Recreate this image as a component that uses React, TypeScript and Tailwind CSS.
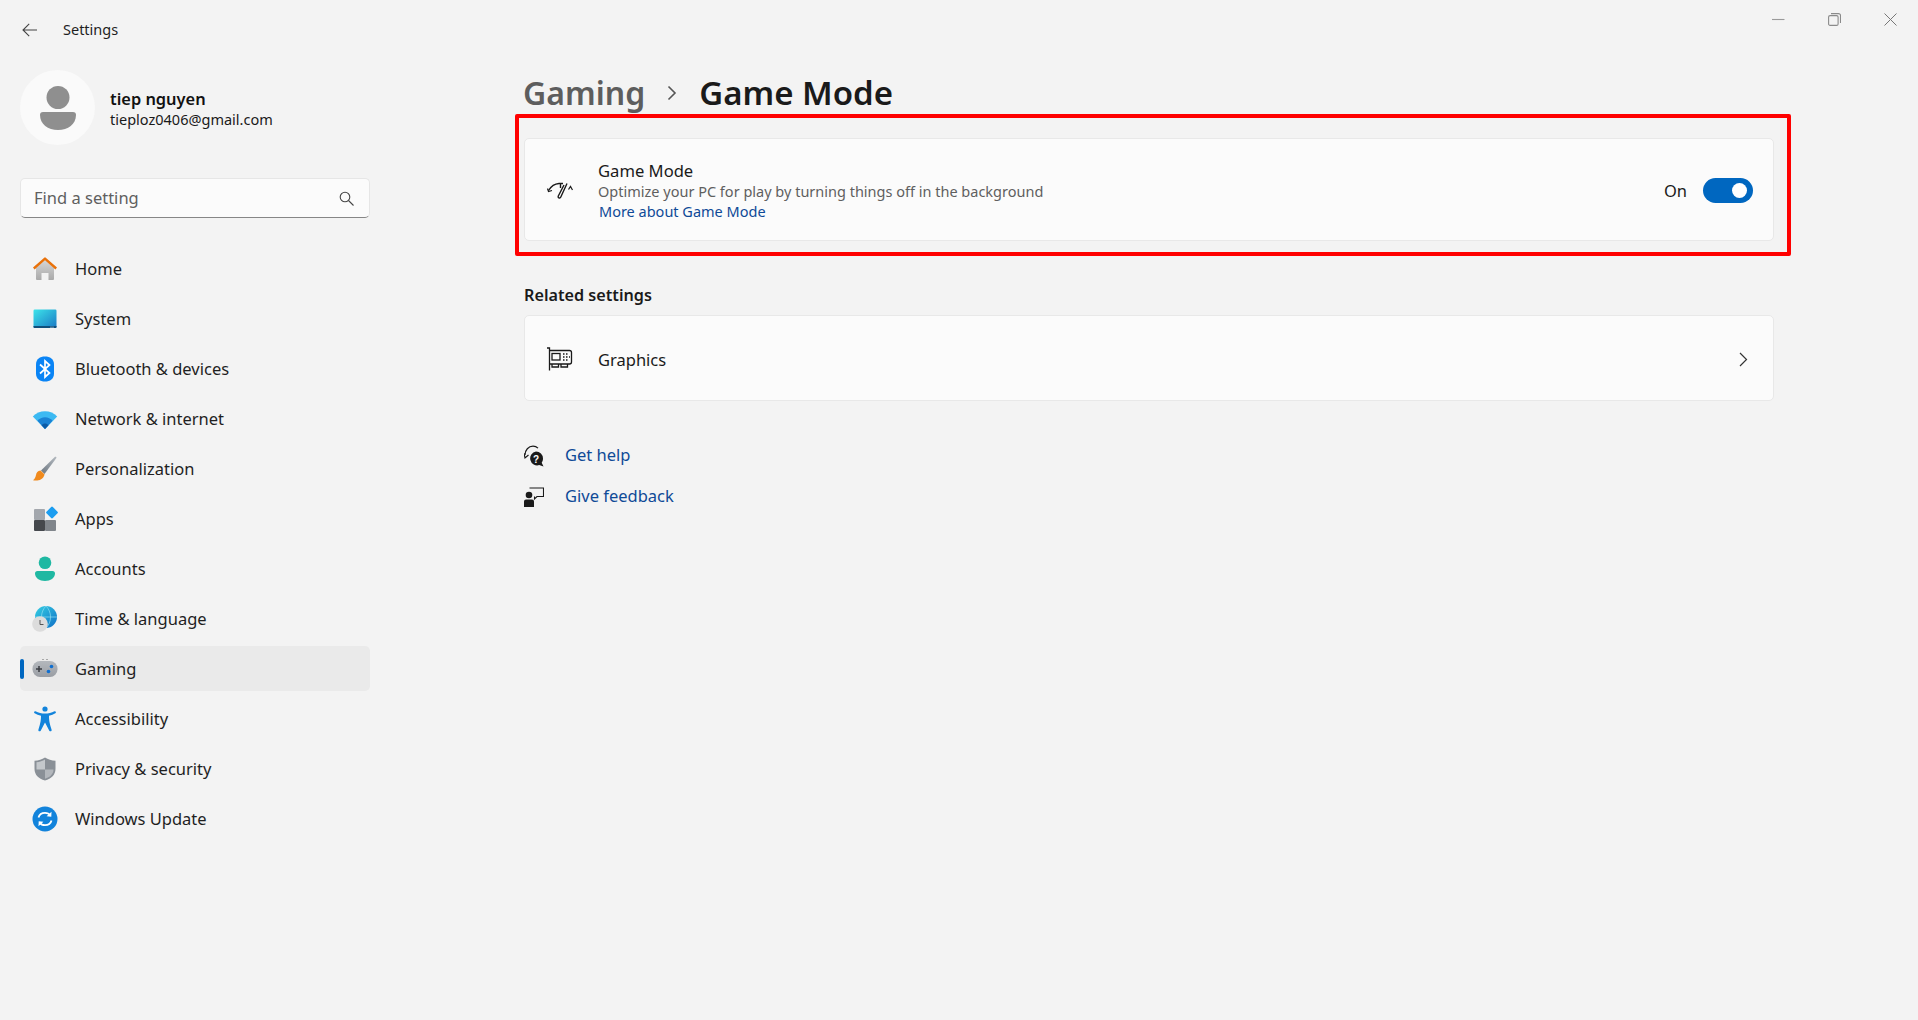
import type { ReactNode } from "react";

function HomeIcon() {
  return (
    <svg width="26" height="26" viewBox="0 0 26 26">
      <defs>
        <linearGradient id="homeBody" x1="0" y1="0" x2="0" y2="1">
          <stop offset="0" stopColor="#d6d6d6" />
          <stop offset="1" stopColor="#a9a9a9" />
        </linearGradient>
      </defs>
      <path d="M4 12 13 4l9 8v11a1 1 0 0 1-1 1h-4.500v-7h-7v7H5a1 1 0 0 1-1-1z" fill="url(#homeBody)" />
      <path d="M1.800 12.500 13 2.600l11.200 9.900" fill="none" stroke="#e8710a" strokeWidth="2.400" strokeLinejoin="round" />
    </svg>
  );
}

function SystemIcon() {
  return (
    <svg width="26" height="26" viewBox="0 0 26 26">
      <defs>
        <linearGradient id="sysScreen" x1="0" y1="0" x2="1" y2="1">
          <stop offset="0" stopColor="#3ce4ea" />
          <stop offset="1" stopColor="#1a78c4" />
        </linearGradient>
      </defs>
      <rect x="1.500" y="3.500" width="23" height="18.500" rx="1.200" fill="url(#sysScreen)" />
      <path d="M1.500 20h23v1a1 1 0 0 1-1 1h-21a1 1 0 0 1-1-1z" fill="#0f4f7c" />
      <rect x="18.500" y="20.700" width="1" height="1" fill="#cfe6f3" />
      <rect x="20.500" y="20.700" width="1" height="1" fill="#cfe6f3" />
    </svg>
  );
}

function BluetoothIcon() {
  return (
    <svg width="26" height="26" viewBox="0 0 26 26">
      <path d="M13 .5c5 0 9 2.500 9 8v9c0 5.500-4 8-9 8s-9-2.500-9-8v-9c0-5.500 4-8 9-8z" fill="#0a84f5" />
      <path d="m8 8.500 9.500 8.500L13 21V5l4.500 4L8 17.500" fill="none" stroke="#fff" strokeWidth="1.700" />
    </svg>
  );
}

function WifiIcon() {
  return (
    <svg width="26" height="26" viewBox="0 0 26 26">
      <path d="M.8 10.500C4 7 8.300 5.200 13 5.200s9 1.800 12.200 5.300L13 23z" fill="#3cb9f2" />
      <path d="M5.500 14.800C7.500 12.500 10 11.300 13 11.300s5.500 1.200 7.500 3.500L13 23z" fill="#1a82d4" />
      <path d="M9.500 19.300c1-1.100 2.200-1.700 3.500-1.700s2.500.6 3.500 1.700L13 23z" fill="#0c5ba6" />
    </svg>
  );
}

function BrushIcon() {
  return (
    <svg width="26" height="26" viewBox="0 0 26 26">
      <defs>
        <linearGradient id="brushHandle" x1="0" y1="1" x2="1" y2="0">
          <stop offset="0" stopColor="#6c7680" />
          <stop offset="1" stopColor="#b4bac0" />
        </linearGradient>
      </defs>
      <path d="M9 14.500 23 .8c.8-.5 1.800.3 1.400 1.200L12.500 18z" fill="url(#brushHandle)" />
      <path d="M8.500 14.500c-3 .3-4 2-4.500 4.500-.4 2-1.300 4-3 5.300 4 .8 10 .3 11.600-5.800z" fill="#f08a1d" />
    </svg>
  );
}

function AppsIcon() {
  return (
    <svg width="26" height="26" viewBox="0 0 26 26">
      <rect x="2" y="3" width="11" height="11" rx="1" fill="#a3a7ad" />
      <rect x="2" y="14" width="11" height="11" rx="1" fill="#45484d" />
      <rect x="13" y="14" width="11" height="11" rx="1" fill="#80858b" />
      <rect x="15.500" y="2" width="9" height="9" rx="1.200" transform="rotate(45 20 6.500)" fill="#1b9df0" />
    </svg>
  );
}

function AccountsIcon() {
  return (
    <svg width="26" height="26" viewBox="0 0 26 26">
      <circle cx="13" cy="6.800" r="6.300" fill="#1fb8a2" />
      <path d="M5.500 15h15A2.500 2.500 0 0 1 23 17.500c0 4.500-4.500 7.500-10 7.500S3 22 3 17.500A2.500 2.500 0 0 1 5.500 15z" fill="#1fb8a2" />
    </svg>
  );
}

function TimeIcon() {
  return (
    <svg width="26" height="26" viewBox="0 0 26 26">
      <defs>
        <linearGradient id="globeFill" x1="0" y1="0" x2="1" y2="1">
          <stop offset="0" stopColor="#35d0e4" />
          <stop offset="1" stopColor="#0f6fc6" />
        </linearGradient>
      </defs>
      <circle cx="14" cy="11" r="11" fill="url(#globeFill)" />
      <path d="M14 0c-3 3-4.500 6.800-4.500 11S11 19 14 22c3-3 4.500-6.800 4.500-11S17 3 14 0zM3 11h22" fill="none" stroke="#8fdcf0" strokeWidth=".7" />
      <circle cx="8" cy="18" r="7.800" fill="#dcdcdc" />
      <path d="M8 14v4.500h3.500" fill="none" stroke="#555" strokeWidth="1" />
    </svg>
  );
}

function GamingIcon() {
  return (
    <svg width="26" height="26" viewBox="0 0 26 26">
      <defs>
        <linearGradient id="padFill" x1="0" y1="0" x2="0" y2="1">
          <stop offset="0" stopColor="#b4b8bd" />
          <stop offset="1" stopColor="#9a9ea4" />
        </linearGradient>
      </defs>
      <rect x=".5" y="5" width="25" height="16" rx="7.500" fill="url(#padFill)" />
      <path d="M7 10v6M4 13h6" stroke="#3a3d42" strokeWidth="1.500" />
      <circle cx="19.500" cy="10.500" r="1.800" fill="#0f6fd0" />
      <circle cx="16.500" cy="15.500" r="1.800" fill="#0f6fd0" />
      <rect x="10.500" y="3" width="1" height="1" fill="#666" />
      <rect x="14.500" y="3" width="1" height="1" fill="#666" />
    </svg>
  );
}

function AccessibilityIcon() {
  return (
    <svg width="26" height="26" viewBox="0 0 26 26">
      <circle cx="13" cy="3" r="2.600" fill="#1283db" />
      <path d="M3.500 5.200c3 1.500 6 2.300 9.500 2.300s6.500-.8 9.500-2.300c1.300-.4 2 1.400.9 2.100-1.900 1.200-4 2-6.400 2.500 0 4 .3 7 2.600 14 .4 1.500-1.600 2.100-2.300.9L13 16.500l-4.300 8.200c-.7 1.200-2.700.6-2.300-.9C8.700 16.800 9 13.800 9 9.800c-2.400-.5-4.500-1.300-6.400-2.500-1.100-.7-.4-2.500.9-2.100z" fill="#1283db" />
    </svg>
  );
}

function ShieldIcon() {
  return (
    <svg width="26" height="26" viewBox="0 0 26 26">
      <path d="M13 1.500c3 2 6.500 3 10.500 3.200v8c0 6-4 10-10.500 11.800C6.500 22.700 2.500 18.700 2.500 12.700v-8C6.500 4.500 10 3.500 13 1.500z" fill="#8a9097" />
      <path d="M13 3.500v10H4.500v-7.200C7.800 6 10.500 5 13 3.500z" fill="#c4c8cc" />
      <path d="M13 13.500h8.500c-.2 4.600-3.400 7.800-8.500 9.200z" fill="#b3b7bc" />
    </svg>
  );
}

function UpdateIcon() {
  return (
    <svg width="26" height="26" viewBox="0 0 26 26">
      <circle cx="13" cy="13" r="12.500" fill="#1283db" />
      <path d="M6.500 11.500C7.300 8.500 9.800 6.800 13 6.800c2.300 0 4.200 1 5.400 2.800M19.500 14.500c-.8 3-3.300 4.700-6.500 4.700-2.300 0-4.200-1-5.400-2.800" fill="none" stroke="#fff" strokeWidth="1.800" />
      <path d="m19.500 5.800-.2 4.900-4.700-.4zM6.500 20.200l.2-4.900 4.700.4z" fill="#fff" />
    </svg>
  );
}

const navItems: { label: string; icon: ReactNode; active?: boolean }[] = [
  { label: "Home", icon: <HomeIcon /> },
  { label: "System", icon: <SystemIcon /> },
  { label: "Bluetooth & devices", icon: <BluetoothIcon /> },
  { label: "Network & internet", icon: <WifiIcon /> },
  { label: "Personalization", icon: <BrushIcon /> },
  { label: "Apps", icon: <AppsIcon /> },
  { label: "Accounts", icon: <AccountsIcon /> },
  { label: "Time & language", icon: <TimeIcon /> },
  { label: "Gaming", icon: <GamingIcon />, active: true },
  { label: "Accessibility", icon: <AccessibilityIcon /> },
  { label: "Privacy & security", icon: <ShieldIcon /> },
  { label: "Windows Update", icon: <UpdateIcon /> },
];

function Sidebar() {
  return (
    <aside className="flex w-[390px] shrink-0 flex-col pl-5 pr-5">
      <div className="flex h-[60px] items-center gap-[26px] pl-[2px]">
        <svg width="15" height="14" viewBox="0 0 15 14" fill="none" stroke="#444" strokeWidth="1.100">
          <path d="M15 7H1M7.200.8 1 7l6.200 6.200" />
        </svg>
        <span className="text-[14.5px] text-[#1f1f1f]">Settings</span>
      </div>

      <div className="mt-[10px] flex items-center gap-[15px]">
        <div className="flex h-[75px] w-[75px] items-center justify-center rounded-full bg-[#fafafa]">
          <svg width="36" height="44" viewBox="0 0 36 44" fill="#8f8f8f">
            <circle cx="18" cy="11.500" r="11.500" />
            <path d="M3 26h30a3 3 0 0 1 3 3c0 9-8 15-18 15S0 38 0 29a3 3 0 0 1 3-3z" />
          </svg>
        </div>
        <div className="flex flex-col pt-[2px]">
          <span className="text-[16.4px] leading-[21px] font-semibold text-[#111]">tiep nguyen</span>
          <span className="text-[14.5px] leading-[20px] text-[#1a1a1a]">tieploz0406@gmail.com</span>
        </div>
      </div>

      <div className="mt-[33px] flex h-[40px] items-center justify-between rounded-[5px] border border-[#e6e6e6] border-b-[#868686] bg-[#fbfbfb] pl-[13px] pr-[15px]">
        <span className="text-[16.5px] text-[#5f5f5f]">Find a setting</span>
        <svg width="15" height="15" viewBox="0 0 15 15" fill="none" stroke="#444" strokeWidth="1.100">
          <circle cx="6" cy="6" r="4.800" />
          <path d="m9.500 9.500 5 5" />
        </svg>
      </div>

      <nav className="mt-[28px] flex flex-col gap-[5px]">
        {navItems.map((item) => (
          <div
            key={item.label}
            className={`relative flex h-[45px] items-center gap-[17px] rounded-[5px] pl-[12px] ${item.active ? "bg-[#eaeaea]" : ""}`}
          >
            {item.active && <span className="absolute left-0 top-[13px] h-[20px] w-[4px] rounded-full bg-[#0067c0]" />}
            {item.icon}
            <span className="pt-[1px] text-[16.5px] text-[#1f1f1f]">{item.label}</span>
          </div>
        ))}
      </nav>
    </aside>
  );
}

function GaugeIcon() {
  return (
    <svg width="26" height="18" viewBox="0 0 26 18" fill="none" stroke="#1a1a1a" strokeWidth="1.400">
      <path d="M1.500 8.500C4 4.500 7.500 1.800 12 1.500h4" />
      <path d="M.5 6.500 1.500 9.500l3.500-1" strokeWidth="1.200" />
      <path d="M13.500 1.500v4.500" />
      <path d="M20 1.500 13.800 15c-.8 1.800-3.300.8-2.500-1L17 3" />
      <path d="M21.500 7.500 23.500 4.500l2 3.500" strokeWidth="1.200" />
    </svg>
  );
}

function GraphicsIcon() {
  return (
    <svg width="26" height="24" viewBox="0 0 26 24" fill="none" stroke="#1a1a1a" strokeWidth="1.300">
      <path d="M0 1h2.500v22.500M2.500 3.500h20a2 2 0 0 1 2 2V15a2 2 0 0 1-2 2h-20" />
      <rect x="5" y="6.500" width="8" height="6.500" />
      <path d="M16 7h1.500M19 7h1.500M16 10h1.500M19 10h1.500M22 10h1M16 13h1.500M19 13h1.500" />
      <path d="M5 17v3h6.500v-3M14 17v3h6.500v-3" />
    </svg>
  );
}

function HelpIcon() {
  return (
    <svg width="20" height="22" viewBox="0 0 20 22">
      <path d="M1 10C1 5 4.500 1.200 9 1.200c2 0 3.700.7 5 2" fill="none" stroke="#1a1a1a" strokeWidth="1.200" />
      <path d="m0 8 1 5 3.500-3" fill="none" stroke="#1a1a1a" strokeWidth="1.200" />
      <path d="M12 6.500a7 7 0 0 1 7 7c0 1.800-.6 3.200-1.300 4.200l1.800 3.800-4.300-1.400a7 7 0 1 1-3.200-13.600z" fill="#1a1a1a" />
      <text x="12" y="17.500" textAnchor="middle" fontSize="10" fontWeight="700" fill="#fff" fontFamily="Liberation Sans, sans-serif">?</text>
    </svg>
  );
}

function FeedbackIcon() {
  return (
    <svg width="20" height="20" viewBox="0 0 20 20">
      <circle cx="5" cy="8" r="3.300" fill="#1a1a1a" />
      <path d="M2 12.500h6a2 2 0 0 1 2 2V20H0v-5.500a2 2 0 0 1 2-2z" fill="#1a1a1a" />
      <path d="M5.500 1h14v8.500h-6.500L10.500 12V9.500" fill="none" stroke="#1a1a1a" strokeWidth="1.100" />
    </svg>
  );
}

function WindowControls() {
  return (
    <div className="flex h-[60px] items-start justify-end gap-[43px] pt-[13px]">
      <svg width="13" height="13" viewBox="0 0 13 13" stroke="#9a9a9a" strokeWidth="1.100" fill="none">
        <path d="M0 6.500h12.500" />
      </svg>
      <svg width="13" height="13" viewBox="0 0 13 13" stroke="#8a8a8a" strokeWidth="1.100" fill="none">
        <rect x=".6" y="2.600" width="9.500" height="9.800" rx="1.500" />
        <path d="M3 .6h7.500a2 2 0 0 1 2 2V10" />
      </svg>
      <svg width="13" height="13" viewBox="0 0 13 13" stroke="#777" strokeWidth="1" fill="none">
        <path d="m.5.500 12 12M12.500.5l-12 12" />
      </svg>
    </div>
  );
}

export default function App() {
  return (
    <div className="flex h-[1020px] w-[1918px] overflow-hidden bg-[#f3f3f3] font-['Noto_Sans',sans-serif]">
      <Sidebar />
      <main className="flex flex-1 flex-col pl-[134px]">
        <div className="pr-[21px]">
          <WindowControls />
        </div>
        <div className="w-[1250px]">
          <div className="flex h-[65px] items-center">
            <h1 className="-ml-[1px] flex items-center text-[33px] leading-none font-semibold">
              <span className="text-[32px] text-[#5d5d5d]">Gaming</span>
              <svg className="mx-[22px]" width="10" height="16" viewBox="0 0 10 16" fill="none" stroke="#555" strokeWidth="1.600">
                <path d="m1.500 1.500 6.500 6.500-6.500 6.500" />
              </svg>
              <span className="text-[#1a1a1a]">Game Mode</span>
            </h1>
          </div>

          <div className="relative mt-[13px] flex h-[103px] items-center rounded-[5px] border border-[#e8e8e8] bg-[#fbfbfb] pl-[22px] pr-[20px] pt-[2px]">
            <div className="absolute top-[-25px] bottom-[-16px] left-[-10px] right-[-18px] rounded-[2px] border-4 border-[#ff0000]" />
            <GaugeIcon />
            <div className="ml-[25px] flex flex-1 flex-col">
              <span className="text-[16.6px] leading-[21px] text-[#1a1a1a]">Game Mode</span>
              <span className="text-[14.5px] leading-[20px] text-[#5f5f5f]">Optimize your PC for play by turning things off in the background</span>
              <a className="pl-[1px] text-[14.5px] leading-[21px] text-[#0f4a97]">More about Game Mode</a>
            </div>
            <span className="mr-[16px] pt-[2px] text-[16.5px] text-[#1a1a1a]">On</span>
            <div className="flex h-[25px] w-[50px] items-center justify-end rounded-full bg-[#0067c0] pr-[6px]">
              <div className="h-[15px] w-[15px] rounded-full bg-white" />
            </div>
          </div>

          <h2 className="mt-[43px] text-[16.2px] leading-[22px] font-semibold text-[#1a1a1a]">Related settings</h2>

          <div className="mt-[9px] flex h-[86px] items-center rounded-[5px] border border-[#e8e8e8] bg-[#fbfbfb] pl-[22px] pr-[25px] pt-[2px]">
            <GraphicsIcon />
            <span className="ml-[25px] flex-1 pt-[2px] text-[16.5px] text-[#1a1a1a]">Graphics</span>
            <svg width="9" height="15" viewBox="0 0 9 15" fill="none" stroke="#333" strokeWidth="1.200">
              <path d="m1 1 6.500 6.500L1 14" />
            </svg>
          </div>

          <div className="mt-[41px] flex flex-col gap-[14px]">
            <div className="flex h-[27px] items-center gap-[21px]">
              <HelpIcon />
              <a className="text-[16.5px] text-[#0f4a97]">Get help</a>
            </div>
            <div className="flex h-[27px] items-center gap-[21px]">
              <FeedbackIcon />
              <a className="text-[16.5px] text-[#0f4a97]">Give feedback</a>
            </div>
          </div>
        </div>
      </main>
    </div>
  );
}
